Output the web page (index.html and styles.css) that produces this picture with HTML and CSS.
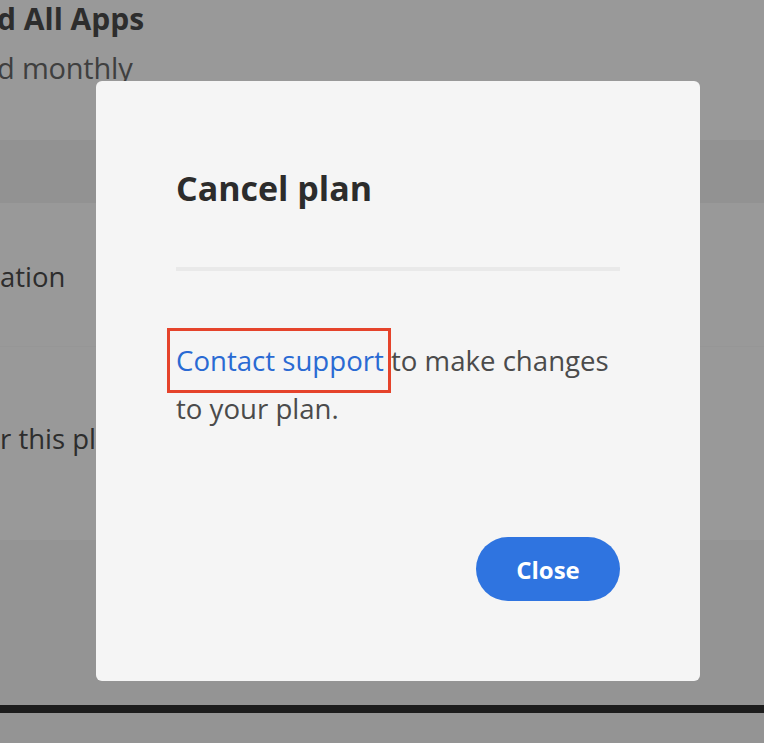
FILE: index.html
```html
<!DOCTYPE html>
<html lang="en">
<head>
<meta charset="utf-8">
<title>Cancel plan</title>
<link rel="stylesheet" href="styles.css">
</head>
<body>
<div class="page">
  <header class="plan-head">
    <h1 class="plan-title">d All Apps</h1>
    <p class="plan-sub">d monthly</p>
  </header>
  <div class="band"></div>
  <section class="details">
    <div class="row row-a"><span>ation</span></div>
    <div class="row row-b"><span>r this plan</span></div>
  </section>
  <section class="foot"></section>
  <div class="darkbar"></div>
  <div class="tail"></div>
</div>

<div class="overlay">
  <div class="dialog" role="dialog" aria-labelledby="dlg-title">
    <h2 class="dialog-title" id="dlg-title">Cancel plan</h2>
    <hr class="dialog-rule">
    <p class="dialog-body"><a class="support-link" href="#">Contact support</a> to make changes to your plan.</p>
    <div class="dialog-actions">
      <button class="btn-close" type="button">Close</button>
    </div>
  </div>
</div>
</body>
</html>
```

FILE: styles.css
```css
* { box-sizing: border-box; }
html, body { margin: 0; padding: 0; }
body {
  width: 764px;
  height: 743px;
  overflow: hidden;
  font-family: "Open Sans", "Noto Sans", sans-serif;
  background: #f7f7f7;
  color: #4b4b4b;
}
.page {
  display: flex;
  flex-direction: column;
  height: 743px;
}
.plan-head {
  height: 140px;
  background: #ffffff;
  margin-left: -3px;
}
.plan-title {
  margin: 0;
  font-size: 30px;
  line-height: 38px;
  font-weight: 700;
  color: #4b4b4b;
}
.plan-sub {
  margin: 11px 0 0;
  font-size: 29px;
  line-height: 38px;
  color: #6a6a6a;
  letter-spacing: -0.2px;
}
.band {
  height: 63px;
  background: #f3f3f3;
}
.details {
  height: 337px;
  background: #ffffff;
  display: flex;
  flex-direction: column;
}
.row {
  display: flex;
  align-items: center;
  font-size: 27.5px;
  color: #4b4b4b;
}
.row-a { height: 144px; padding-top: 4px; border-bottom: 1px solid #fbfbfb; }
.row-b { height: 193px; padding-bottom: 10px; }
.foot { height: 165px; background: #f7f7f7; }
.darkbar { height: 8px; background: #2f2f2f; }
.tail { flex: 1; background: #f7f7f7; }

.overlay {
  position: fixed;
  inset: 0;
  background: rgba(0, 0, 0, 0.4);
  padding: 81px 0 0 96px;
}
.dialog {
  width: 604px;
  height: 600px;
  background: #f5f5f5;
  border-radius: 6px;
  padding: 87px 80px 0 80px;
  display: flex;
  flex-direction: column;
}
.dialog-title {
  margin: 0;
  font-size: 34px;
  line-height: 40px;
  font-weight: 700;
  color: #2c2c2c;
}
.dialog-rule {
  margin: 59px 0 0;
  border: 0;
  height: 4px;
  background: #e9e9e9;
}
.dialog-body {
  margin: 65px 0 0;
  font-size: 27.6px;
  line-height: 48px;
  color: #4b4b4b;
}
.support-link {
  color: #2a6ad3;
  text-decoration: none;
  border: 3px solid #e5432b;
  padding: 10px 4px 11px 6px;
  margin: 0 -7px 0 -9px;
}
.dialog-actions {
  display: flex;
  justify-content: flex-end;
  margin-top: 105px;
}
.btn-close {
  width: 144px;
  height: 64px;
  border: 0;
  border-radius: 32px;
  background: #2f74e0;
  color: #ffffff;
  font-family: inherit;
  font-size: 24px;
  font-weight: 700;
}
```
